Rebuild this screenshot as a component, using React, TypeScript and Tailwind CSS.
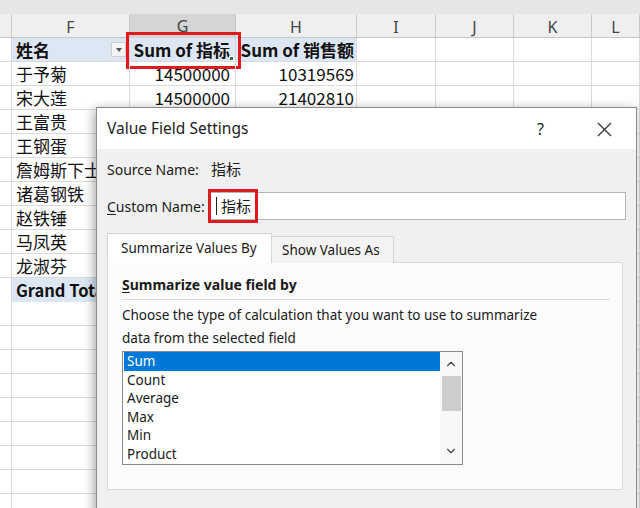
import { ChevronUp, ChevronDown } from "lucide-react";

const cols = ["", "F", "G", "H", "I", "J", "K", "L"];

const names = [
  "于予菊",
  "宋大莲",
  "王富贵",
  "王钢蛋",
  "詹姆斯下士",
  "诸葛钢铁",
  "赵铁锤",
  "马凤英",
  "龙淑芬",
];

const gValues = ["14500000", "14500000"];
const hValues = ["10319569", "21402810"];

const grid = "grid grid-cols-[12px_118px_106px_121px_79px_78px_78px_1fr]";

function Cell({ children, className = "" }: { children?: React.ReactNode; className?: string }) {
  return (
    <div className={`h-full border-r border-[#d9d9d9] overflow-visible whitespace-nowrap ${className}`}>
      {children}
    </div>
  );
}

function Sheet() {
  const rows = Array.from({ length: 20 });
  return (
    <div className="font-['Noto_Sans_CJK_SC',sans-serif] text-[17px] text-[#111]">
      <div className="h-[14px] bg-[#e6e6e6]" />
      <div className={`${grid} h-[24px] bg-[#efefef] border-b border-[#c6c6c6]`}>
        {cols.map((c, i) => (
          <div
            key={i}
            className={`flex items-center justify-center border-r border-[#c9c9c9] text-[16px] text-[#444] font-['Noto_Sans',sans-serif] ${
              c === "G" ? "bg-[#d5d5d5] border-b-2 border-b-[#9fb8a8]" : ""
            }`}
          >
            {c}
          </div>
        ))}
      </div>
      {rows.map((_, r) => {
        const isHeader = r === 0;
        const isTotal = r === 10;
        const name = r >= 1 && r <= 9 ? names[r - 1] : "";
        const blue = isHeader || isTotal ? "bg-[#dde7f3]" : "";
        return (
          <div key={r} className={`${grid} h-[24px] border-b border-[#dadada] leading-[23px]`}>
            <Cell className="bg-white" />
            <Cell className={`${blue} pl-[4px] relative`}>
              {isHeader && (
                <>
                  <span className="font-bold">姓名</span>
                  <span className="absolute right-[3px] top-[4px] w-[15px] h-[15px] bg-[#f4f4f4] border border-[#cfcfcf] flex items-center justify-center">
                    <span className="w-0 h-0 border-l-[3px] border-r-[3px] border-t-[4px] border-l-transparent border-r-transparent border-t-[#555]" />
                  </span>
                </>
              )}
              {name}
              {isTotal && <span className="font-bold text-[16.5px]">Grand Total</span>}
            </Cell>
            <Cell className={`${blue} text-right pr-[5px] relative`}>
              {isHeader && <span className="font-bold">Sum of 指标</span>}
              {r >= 1 && r <= 2 && gValues[r - 1]}
              {isHeader && (
                <>
                  <span className="absolute left-[-4px] top-[-6px] w-[115px] h-[37px] border-[3px] border-[#e0191f]" />
                  <span className="absolute right-[1px] bottom-[0px] w-[5px] h-[5px] bg-[#217346] border border-white" />
                </>
              )}
            </Cell>
            <Cell className={`${blue} text-right pr-[2px]`}>
              {isHeader && <span className="font-bold">Sum of 销售额</span>}
              {r >= 1 && r <= 2 && hValues[r - 1]}
            </Cell>
            <Cell />
            <Cell />
            <Cell />
            <Cell />
          </div>
        );
      })}
    </div>
  );
}

function Dialog() {
  const items = ["Sum", "Count", "Average", "Max", "Min", "Product"];
  return (
    <div className="absolute left-[96px] top-[107px] w-[541px] h-[420px] bg-[#f0f0f0] border border-[#8c8c8c] shadow-[-2px_2px_10px_rgba(0,0,0,0.35)] font-['Noto_Sans','Noto_Sans_CJK_SC',sans-serif] text-[#1a1a1a]">
      <div className="h-[41px] bg-white flex items-center pl-[10px] pr-[24px]">
        <span className="text-[15.5px] text-[#222]">Value Field Settings</span>
        <span className="ml-auto text-[16px] text-[#222] mr-[53px]">?</span>
        <svg width="15" height="15" viewBox="0 0 15 15" className="mt-[1px]">
          <path d="M1 1L14 14M14 1L1 14" stroke="#333" strokeWidth="1.3" />
        </svg>
      </div>
      <div className="px-[10px]">
        <div className="mt-[8px] h-[24px] flex items-center text-[14px]">
          <span className="w-[104px]">Source Name:</span>
          <span className="font-['Noto_Sans_CJK_SC',sans-serif] text-[15px]">指标</span>
        </div>
        <div className="mt-[11px] h-[28px] flex items-center text-[14px]">
          <span className="w-[103px]">
            <span className="underline underline-offset-2">C</span>ustom Name:
          </span>
          <div className="relative w-[416px] h-[28px] bg-white border border-[#b4b4b4] flex items-center pl-[5px]">
            <span className="w-[1px] h-[18px] bg-[#222] mr-[4px]" />
            <span className="font-['Noto_Sans_CJK_SC',sans-serif] text-[15px]">指标</span>
            <span className="absolute left-[-3px] top-[-4px] w-[50px] h-[34px] border-[3px] border-[#e0191f]" />
          </div>
        </div>
        <div className="mt-[13px] flex items-end text-[13.5px]">
          <div className="h-[30px] w-[165px] bg-white border border-b-0 border-[#d5d5d5] flex items-center pl-[13px] relative z-10">
            Summarize Values By
          </div>
          <div className="h-[27px] w-[122px] bg-[#f3f3f3] border border-l-0 border-b-0 border-[#d5d5d5] flex items-center pl-[10px]">
            Show Values As
          </div>
        </div>
        <div className="w-[516px] h-[228px] bg-[#fcfcfc] border border-[#d9d9d9] -mt-[1px] px-[14px]">
          <div className="mt-[12px] text-[14px] font-bold h-[20px] leading-[20px]">
            <span className="underline underline-offset-2">S</span>ummarize value field by
          </div>
          <div className="mt-[4px] h-px w-[488px] bg-[#dadada]" />
          <div className="mt-[4px] text-[13.5px] leading-[23px]">
            <div>Choose the type of calculation that you want to use to summarize</div>
            <div>data from the selected field</div>
          </div>
          <div className="mt-[1px] w-[341px] h-[114px] bg-white border border-[#8a8a8a] flex">
            <div className="flex-1 pl-[1px] text-[13.5px]">
              {items.map((it, i) => (
                <div
                  key={it}
                  className={`h-[18.5px] leading-[18.5px] pl-[3px] ${
                    i === 0 ? "bg-[#0078d7] text-white" : ""
                  }`}
                >
                  {it}
                </div>
              ))}
            </div>
            <div className="w-[22px] flex flex-col items-center bg-[#f8f8f8]">
              <ChevronUp size={14} strokeWidth={2} className="mt-[5px] text-[#444]" />
              <div className="mt-[5px] w-[19px] h-[35px] bg-[#cdcdcd]" />
              <ChevronDown size={14} strokeWidth={2} className="mt-auto mb-[6px] text-[#444]" />
            </div>
          </div>
        </div>
      </div>
    </div>
  );
}

export default function App() {
  return (
    <div className="relative w-[640px] h-[508px] overflow-hidden bg-white">
      <Sheet />
      <Dialog />
    </div>
  );
}
